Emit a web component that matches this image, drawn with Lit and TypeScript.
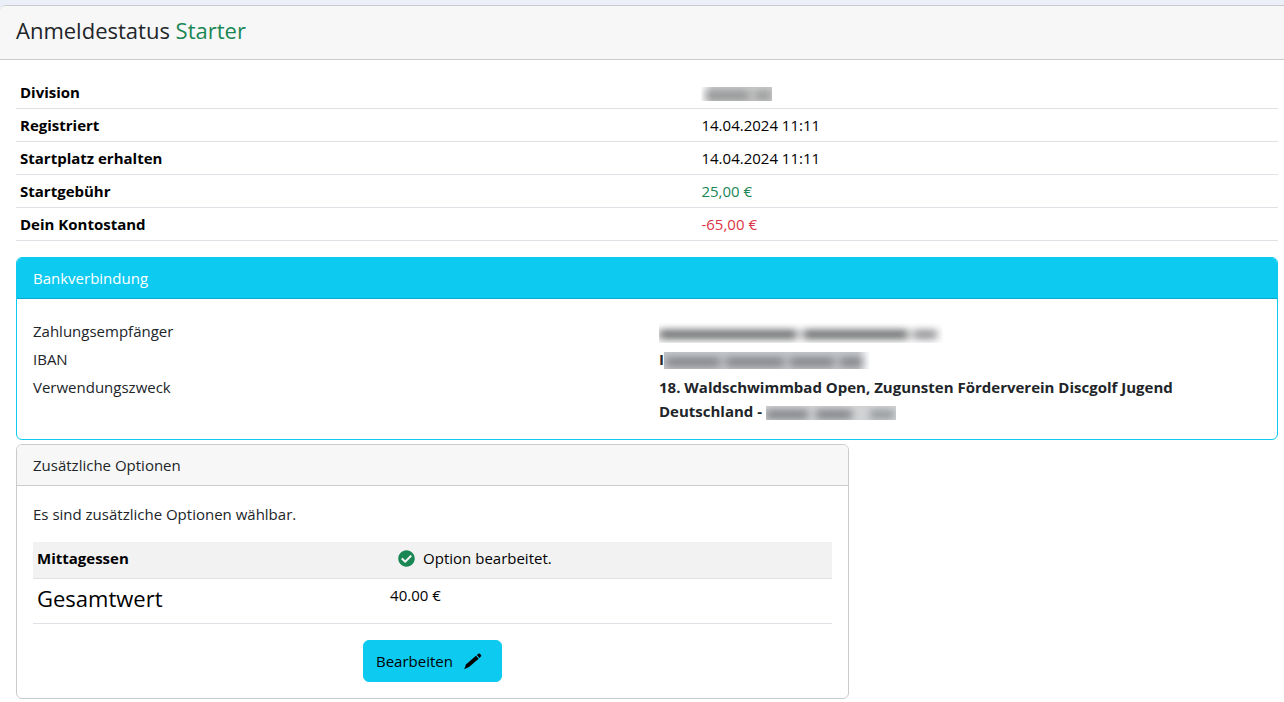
import { LitElement, html, css, svg } from "lit";
import { customElement, property } from "lit/decorators.js";

interface Smudge {
  x: number;
  w: number;
  o: number;
}

/** A stretch of private text, shown only as a soft grey smear. */
@customElement("redacted-text")
export class RedactedText extends LitElement {
  @property({ type: Number }) width = 80;
  @property({ type: Number }) height = 16;
  @property({ type: String }) base = "none";
  @property({ attribute: false }) parts: Smudge[] = [];

  static styles = css`
    :host {
      display: inline-block;
      vertical-align: middle;
      line-height: 0;
    }
    .smear {
      display: block;
    }
  `;

  render() {
    return html`<svg class="smear" width=${this.width} height=${this.height} aria-hidden="true">
      <defs>
        <filter id="soft" x="-20%" y="-100%" width="140%" height="300%">
          <feGaussianBlur stdDeviation="4 3" />
        </filter>
        <linearGradient id="fade">
          <stop offset="0" stop-color="#c4c7ca" />
          <stop offset="0.94" stop-color="#c4c7ca" />
          <stop offset="1" stop-color="#c4c7ca" stop-opacity="0" />
        </linearGradient>
        <linearGradient id="fadein">
          <stop offset="0" stop-color="#cacaca" stop-opacity="0" />
          <stop offset="0.16" stop-color="#cacaca" />
          <stop offset="1" stop-color="#cacaca" />
        </linearGradient>
      </defs>
      <rect width=${this.width} height=${this.height} fill=${this.base} />
      <g filter="url(#soft)">
        ${this.parts.map(
          (p) => svg`<rect x=${p.x} y=${this.height / 2 - 4} width=${p.w} height="11" fill="#55585c" opacity=${p.o} />`
        )}
      </g>
    </svg>`;
  }
}

@customElement("app-root")
export class AppRoot extends LitElement {
  static styles = css`
    :host {
      display: block;
      padding-top: 5px;
      background: #eaeff8;
      color: #212529;
      font: 15px/24px "Open Sans", "Noto Sans", sans-serif;
    }
    * {
      box-sizing: border-box;
    }
    h1,
    h2,
    p {
      margin: 0;
      font-weight: 400;
    }
    h2 {
      font-size: 15px;
    }
    .page {
      border-top: 1px solid #cacbcc;
      border-radius: 6px 0 0 0;
      background: #fff;
      overflow: hidden;
    }
    .page-head {
      padding: 9px 16px 14px;
      background: #f7f7f7;
      border-bottom: 1px solid #cacbcc;
    }
    h1 {
      font-size: 22px;
      line-height: 30px;
    }
    .page-body {
      padding: 16px 6px 3px 16px;
    }
    .ok {
      color: #198754;
    }
    .due {
      color: #dc3545;
    }
    table {
      width: 100%;
      margin-bottom: 16px;
      border-collapse: separate;
      border-spacing: 0;
      table-layout: fixed;
      color: #000;
    }
    th,
    td {
      padding: 4px;
      text-align: left;
      vertical-align: top;
      border-bottom: 1px solid #dee2e6;
    }
    th {
      font-weight: 700;
    }
    .facts th {
      width: 54%;
    }
    .card {
      border: 1px solid #cacbcc;
      border-radius: 6px;
      background: #fff;
      overflow: hidden;
    }
    .card-head {
      padding: 8px 16px;
      background: #f7f7f7;
      border-bottom: 1px solid #cacbcc;
    }
    .card-body {
      padding: 16px;
    }
    .bank {
      margin-bottom: 4px;
      border-color: #0dcaf0;
    }
    .bank .card-head {
      background: #0dcaf0;
      border-bottom-color: #0ba8cc;
      color: #fff;
    }
    dl {
      display: grid;
      grid-template-columns: 1fr 1fr;
      row-gap: 4px;
      margin: 0;
      padding-top: 4px;
    }
    dd {
      margin: 0;
      padding: 0 12px;
      font-weight: 700;
    }
    .options {
      width: 66%;
    }
    .options p {
      margin-bottom: 16px;
    }
    .options th {
      width: 44.2%;
    }
    .options .striped > * {
      padding-bottom: 8px;
      background: #f2f2f2;
    }
    .options .total th {
      padding-bottom: 10px;
      font-size: 22px;
      font-weight: 400;
      line-height: 30px;
    }
    .state {
      display: flex;
      align-items: center;
      gap: 8px;
      padding-left: 8px;
    }
    .actions {
      display: flex;
      justify-content: center;
    }
    button {
      display: flex;
      align-items: center;
      gap: 8px;
      padding: 8px 16px 8px 12px;
      border: 1px solid #0dcaf0;
      border-radius: 6px;
      background: #0dcaf0;
      color: #000;
      font: inherit;
      cursor: pointer;
    }
  `;

  render() {
    return html`
      <main class="page">
        <header class="page-head">
          <h1>Anmeldestatus <span class="ok">Starter</span></h1>
        </header>
        <div class="page-body">
          <table class="facts">
            <tbody>
              <tr>
                <th scope="row">Division</th>
                <td>
                  <redacted-text
                    width="71"
                    height="14"
                    base="url(#fadein)"
                    .parts=${[{ x: 4, w: 44, o: 0.4 }, { x: 54, w: 16, o: 0.35 }]}
                  ></redacted-text>
                </td>
              </tr>
              <tr>
                <th scope="row">Registriert</th>
                <td>14.04.2024 11:11</td>
              </tr>
              <tr>
                <th scope="row">Startplatz erhalten</th>
                <td>14.04.2024 11:11</td>
              </tr>
              <tr>
                <th scope="row">Startgebühr</th>
                <td><span class="ok">25,00 €</span></td>
              </tr>
              <tr>
                <th scope="row">Dein Kontostand</th>
                <td><span class="due">-65,00 €</span></td>
              </tr>
            </tbody>
          </table>

          <section class="card bank">
            <h2 class="card-head">Bankverbindung</h2>
            <div class="card-body">
              <dl>
                <dt>Zahlungsempfänger</dt>
                <dd>
                  <redacted-text
                    width="284"
                    height="20"
                    .parts=${[{ x: 0, w: 138, o: 0.75 }, { x: 144, w: 105, o: 0.75 }, { x: 254, w: 24, o: 0.55 }]}
                  ></redacted-text>
                </dd>
                <dt>IBAN</dt>
                <dd>
                  I<redacted-text
                    width="206"
                    height="17"
                    base="url(#fade)"
                    .parts=${[{ x: 2, w: 54, o: 0.5 }, { x: 62, w: 58, o: 0.5 }, { x: 126, w: 44, o: 0.5 }, { x: 176, w: 22, o: 0.5 }]}
                  ></redacted-text>
                </dd>
                <dt>Verwendungszweck</dt>
                <dd>
                  18. Waldschwimmbad Open, Zugunsten Förderverein Discgolf Jugend Deutschland -
                  <redacted-text
                    width="130"
                    height="14"
                    base="#d2d4d6"
                    .parts=${[{ x: 0, w: 42, o: 0.55 }, { x: 50, w: 36, o: 0.55 }, { x: 104, w: 24, o: 0.4 }]}
                  ></redacted-text>
                </dd>
              </dl>
            </div>
          </section>

          <section class="card options">
            <h2 class="card-head">Zusätzliche Optionen</h2>
            <div class="card-body">
              <p>Es sind zusätzliche Optionen wählbar.</p>
              <table>
                <tbody>
                  <tr class="striped">
                    <th scope="row">Mittagessen</th>
                    <td>
                      <div class="state">
                        <svg width="17" height="17" viewBox="0 0 512 512" aria-hidden="true">
                          <path
                            fill="#198754"
                            d="M504 256c0 137-111 248-248 248S8 393 8 256 119 8 256 8s248 111 248 248zM227 387l184-184c6-6 6-16 0-22l-22-23c-7-6-17-6-23 0L216 308l-70-70c-6-6-16-6-23 0l-22 23c-6 6-6 16 0 22l104 104c6 6 16 6 22 0z"
                          />
                        </svg>
                        Option bearbeitet.
                      </div>
                    </td>
                  </tr>
                  <tr class="total">
                    <th scope="row">Gesamtwert</th>
                    <td>40.00 €</td>
                  </tr>
                </tbody>
              </table>
              <div class="actions">
                <button type="button">
                  Bearbeiten
                  <svg width="24" height="24" viewBox="0 0 24 24" aria-hidden="true">
                    <path d="M3.2 20.2l2-4.9 9.8-8.5 2.7 2.9-9.7 8.4z" />
                    <path d="M15.8 6.1l1.6-1.4c.5-.4 1.1-.4 1.5.1l1.1 1.2c.4.5.4 1.1-.1 1.5l-1.5 1.4z" />
                  </svg>
                </button>
              </div>
            </div>
          </section>
        </div>
      </main>
    `;
  }
}
